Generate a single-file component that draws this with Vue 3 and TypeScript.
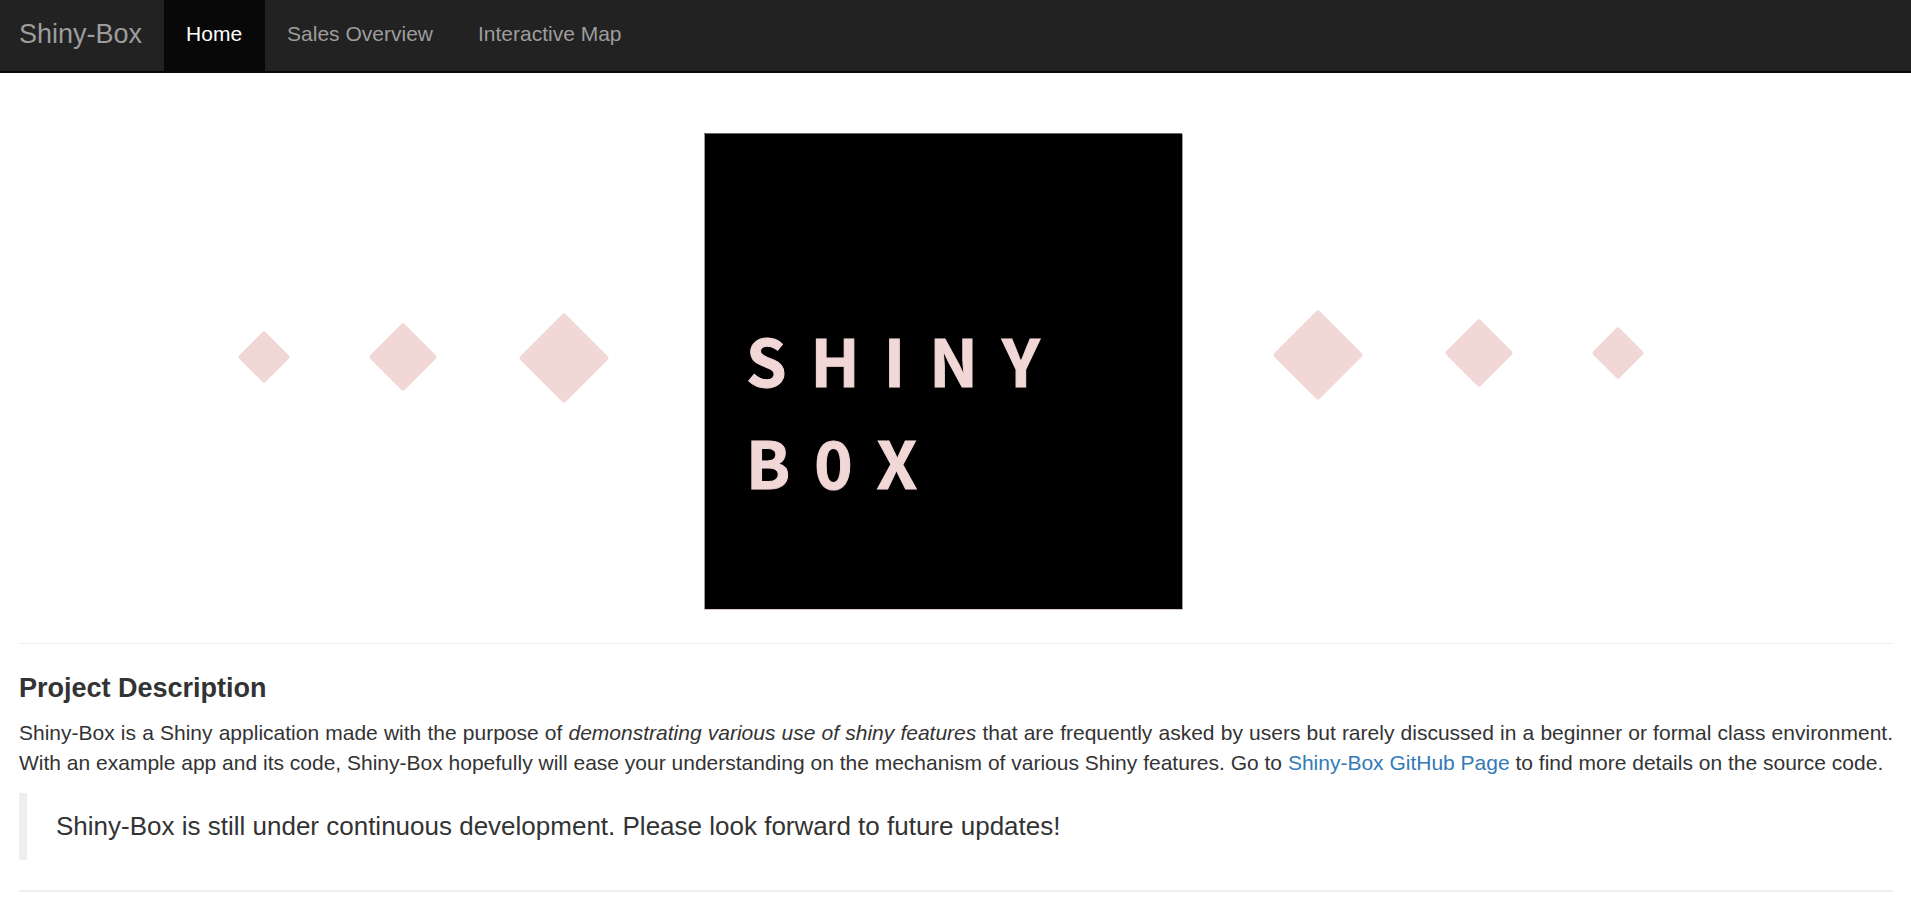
<script setup lang="ts">
import { ref } from 'vue'

interface Tab {
  id: string
  label: string
}

interface Diamond {
  x: number
  y: number
  half: number
}

const tabs: Tab[] = [
  { id: 'home', label: 'Home' },
  { id: 'sales', label: 'Sales Overview' },
  { id: 'map', label: 'Interactive Map' },
]

const active = ref('home')

const diamonds: Diamond[] = [
  { x: 245, y: 284, half: 23 },
  { x: 384, y: 284, half: 31 },
  { x: 545, y: 285, half: 42 },
  { x: 1299, y: 282, half: 42 },
  { x: 1460, y: 280, half: 31 },
  { x: 1599, y: 280, half: 23 },
]

const outline = (d: Diamond): string =>
  `M${d.x} ${d.y - d.half}l${d.half} ${d.half}l${-d.half} ${d.half}l${-d.half} ${-d.half}z`
</script>

<template>
  <div class="page">
    <nav class="navbar">
      <a class="brand" href="#">Shiny-Box</a>
      <a
        v-for="tab in tabs"
        :key="tab.id"
        class="tab"
        :class="{ active: active === tab.id }"
        :href="'#' + tab.id"
        @click="active = tab.id"
      >{{ tab.label }}</a>
    </nav>

    <main class="content">
      <svg class="banner" viewBox="0 0 1874 570" role="img" aria-label="Shiny Box">
        <path v-for="d in diamonds" :key="d.x" class="diamond" :d="outline(d)" />
        <rect class="box" x="686" y="60" width="477" height="476" />
        <path class="edge-top" d="M685 60h478v1h-478z" />
        <path class="edge-side" d="M685 61h1v475h-1zM1163 61h1v475h-1z" />
        <path class="edge-bottom" d="M685 536h479v1h-479z" />
        <text class="wordmark" x="727" y="314">SHINY</text>
        <text class="wordmark" x="727" y="416">B0X</text>
      </svg>

      <hr class="rule" />

      <h4 class="title">Project Description</h4>
      <p class="text">
        Shiny-Box is a Shiny application made with the purpose of
        <em>demonstrating various use of shiny features</em> that are frequently asked by users but
        rarely discussed in a beginner or formal class environment. With an example app and its
        code, Shiny-Box hopefully will ease your understanding on the mechanism of various Shiny
        features. Go to <a class="link" href="#github">Shiny-Box GitHub Page</a> to find more
        details on the source code.
      </p>
      <blockquote class="note">Shiny-Box is still under continuous development. Please look forward to future updates!</blockquote>

      <hr class="rule thick" />
    </main>
  </div>
</template>

<style>
body {
  margin: 0;
  background: #fff;
}
</style>

<style scoped>
.page {
  font-family: "Liberation Sans", Arial, sans-serif;
  font-size: 21px;
  line-height: 30px;
  color: #333;
}

.navbar {
  display: flex;
  background: #222;
  border-bottom: 2px solid #080808;
}

.brand,
.tab {
  padding: 19px 23px 22px 22px;
  color: #9d9d9d;
  text-decoration: none;
}

.brand {
  padding-right: 22px;
  padding-left: 19px;
  font-size: 27px;
}

.tab.active {
  background: #080808;
  color: #fff;
}

.content {
  padding: 0 18px 0 19px;
}

.banner {
  display: block;
  width: 100%;
}

.diamond {
  fill: #f2d7d7;
  stroke: #f2d7d7;
  stroke-width: 5;
  stroke-linejoin: round;
}

.box {
  fill: #000;
}

.edge-top {
  fill: #666;
}

.edge-side {
  fill: #999;
}

.edge-bottom {
  fill: #d5c6c8;
}

.wordmark {
  fill: #f2d7d7;
  stroke: #f2d7d7;
  stroke-width: 1;
  font-family: "Noto Sans CJK SC", sans-serif;
  font-size: 65px;
  font-weight: 700;
  letter-spacing: 24px;
}

.rule {
  margin: 0;
  border: 0;
  border-top: 1px solid #eee;
}

.rule.thick {
  border-top-width: 2px;
}

.title {
  margin: 29px 0 15px;
  font-size: 27px;
  font-weight: 700;
  line-height: 30px;
}

.text {
  margin: 0 0 15px;
  text-align: justify;
}

.link {
  color: #337ab7;
  text-decoration: none;
}

.note {
  margin: 0 0 30px;
  padding: 18px 29px 19px;
  border-left: 8px solid #eee;
  font-size: 26px;
}
</style>
